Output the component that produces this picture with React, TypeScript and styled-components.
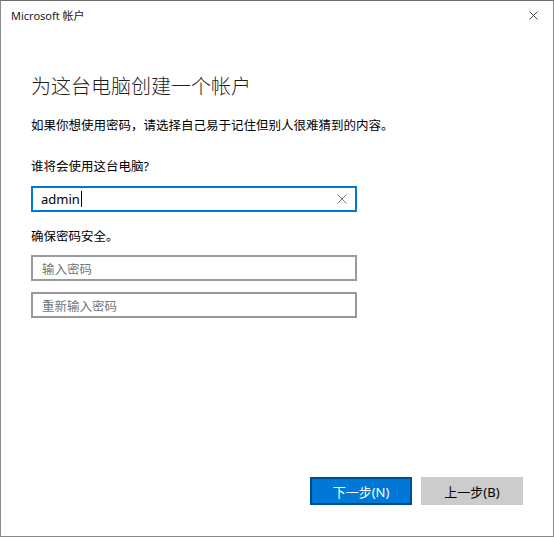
import React from "react"
import styled, { createGlobalStyle } from "styled-components"

const GlobalStyle = createGlobalStyle`
    html, body {
        margin: 0;
        padding: 0;
        background: #ffffff;
    }
    body {
        font-family: "Segoe UI", "Noto Sans", "Noto Sans CJK SC", sans-serif;
        color: #000000;
    }
`

const Window = styled.div`
    box-sizing: border-box;
    width: 554px;
    height: 537px;
    display: flex;
    flex-direction: column;
    background: #ffffff;
    border: 1px solid #8a8a8a;
    border-top-color: #6e6e6e;
`

const TitleBar = styled.div`
    height: 28px;
    display: flex;
    align-items: center;
    justify-content: space-between;
    padding-left: 10px;
    font-size: 11px;
    color: #1a1a1a;
`

const CloseButton = styled.div`
    width: 40px;
    height: 28px;
    display: flex;
    align-items: center;
    justify-content: center;
    color: #333333;
`

const Content = styled.div`
    flex: 1;
    display: flex;
    flex-direction: column;
    padding: 44px 30px 31px 30px;
`

const Heading = styled.h1`
    margin: 0;
    font-size: 20px;
    line-height: 28px;
    font-weight: 300;
    color: #1f1f1f;
`

const Text = styled.p<{ $gap: number }>`
    margin: ${p => p.$gap}px 0 0 0;
    font-size: 12.5px;
    line-height: 18px;
`

const Field = styled.div<{ $focused?: boolean; $gap: number }>`
    box-sizing: border-box;
    width: 326px;
    height: 26px;
    margin-top: ${p => p.$gap}px;
    display: flex;
    align-items: center;
    padding: 0 8px 0 9px;
    border: 2px solid ${p => (p.$focused ? "#0078d7" : "#999999")};
    font-size: 12.5px;
    color: ${p => (p.$focused ? "#000000" : "#767676")};
`

const Value = styled.span`
    flex: 1;
    display: flex;
    align-items: center;
    margin-left: -1px;
    font-size: 13px;
`

const Caret = styled.span`
    display: inline-block;
    width: 1px;
    height: 16px;
    margin-left: 1px;
    background: #000000;
`

const ClearIcon = styled.span`
    display: flex;
    color: #7a7a7a;
`

const Footer = styled.div`
    margin-top: auto;
    display: flex;
    justify-content: flex-end;
    gap: 9px;
`

const Button = styled.button<{ $primary?: boolean }>`
    box-sizing: border-box;
    width: 102px;
    height: 28px;
    padding: 0;
    font-family: inherit;
    font-size: 13px;
    border: 2px solid ${p => (p.$primary ? "#004e8c" : "#cccccc")};
    background: ${p => (p.$primary ? "#0078d7" : "#cccccc")};
    color: ${p => (p.$primary ? "#ffffff" : "#000000")};
`

const Cross = ({ size }: { size: number }) => (
    <svg width={size} height={size} viewBox="0 0 10 10" fill="none" stroke="currentColor" strokeWidth="1">
        <path d="M0.5 0.5 L9.5 9.5 M9.5 0.5 L0.5 9.5" />
    </svg>
)

const App = () => (
    <>
        <GlobalStyle />
        <Window>
            <TitleBar>
                <span>Microsoft 帐户</span>
                <CloseButton>
                    <Cross size={9} />
                </CloseButton>
            </TitleBar>
            <Content>
                <Heading>为这台电脑创建一个帐户</Heading>
                <Text $gap={16}>如果你想使用密码，请选择自己易于记住但别人很难猜到的内容。</Text>
                <Text $gap={23}>谁将会使用这台电脑?</Text>
                <Field $focused $gap={10}>
                    <Value>
                        admin
                        <Caret />
                    </Value>
                    <ClearIcon>
                        <Cross size={10} />
                    </ClearIcon>
                </Field>
                <Text $gap={16}>确保密码安全。</Text>
                <Field $gap={9}>输入密码</Field>
                <Field $gap={11}>重新输入密码</Field>
                <Footer>
                    <Button $primary>下一步(N)</Button>
                    <Button>上一步(B)</Button>
                </Footer>
            </Content>
        </Window>
    </>
)

export default App
